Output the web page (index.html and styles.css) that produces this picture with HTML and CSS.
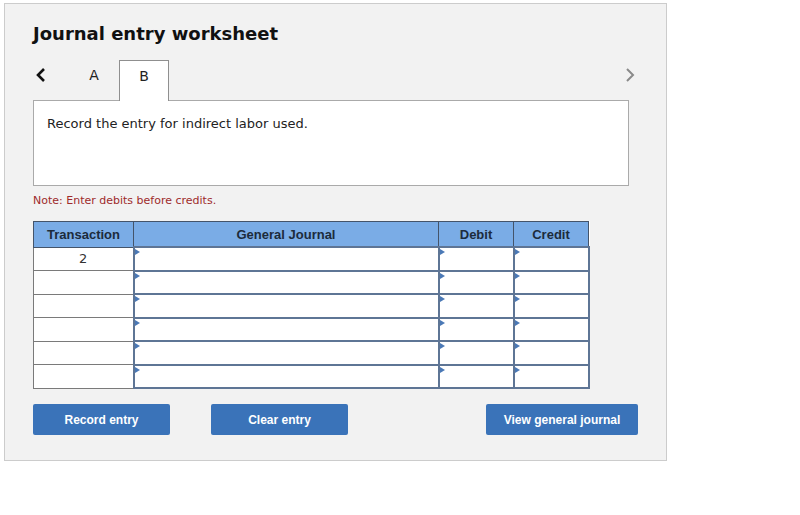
FILE: index.html
```html
<!DOCTYPE html>
<html>
<head>
<link rel="stylesheet" href="styles.css">
</head>
<body>
	<div class="worksheet">
		<h1 class="titulo">Journal entry worksheet</h1>

		<div class="abas">
			<span class="seta seta_esq">
				<svg width="11" height="16" viewBox="0 0 11 16"><path d="M9 2 L3 8 L9 14" fill="none" stroke="#111" stroke-width="2.6"/></svg>
			</span>
			<span class="aba">A</span>
			<span class="aba ativa">B</span>
			<span class="seta seta_dir">
				<svg width="11" height="16" viewBox="0 0 11 16"><path d="M2 2 L8 8 L2 14" fill="none" stroke="#8a8a8a" stroke-width="2"/></svg>
			</span>
		</div>

		<div class="enunciado">Record the entry for indirect labor used.</div>

		<p class="nota">Note: Enter debits before credits.</p>

		<table class="diario">
			<colgroup>
				<col class="col_trans">
				<col class="col_conta">
				<col class="col_valor">
				<col class="col_valor">
			</colgroup>
			<tr>
				<th>Transaction</th>
				<th>General Journal</th>
				<th>Debit</th>
				<th>Credit</th>
			</tr>
			<tr>
				<td class="trans">2</td>
				<td class="campo"></td>
				<td class="campo"></td>
				<td class="campo"></td>
			</tr>
			<tr>
				<td class="trans"></td>
				<td class="campo"></td>
				<td class="campo"></td>
				<td class="campo"></td>
			</tr>
			<tr>
				<td class="trans"></td>
				<td class="campo"></td>
				<td class="campo"></td>
				<td class="campo"></td>
			</tr>
			<tr>
				<td class="trans"></td>
				<td class="campo"></td>
				<td class="campo"></td>
				<td class="campo"></td>
			</tr>
			<tr>
				<td class="trans"></td>
				<td class="campo"></td>
				<td class="campo"></td>
				<td class="campo"></td>
			</tr>
			<tr>
				<td class="trans"></td>
				<td class="campo"></td>
				<td class="campo"></td>
				<td class="campo"></td>
			</tr>
		</table>

		<div class="botoes">
			<button class="botao">Record entry</button>
			<button class="botao botao_limpar">Clear entry</button>
			<button class="botao botao_ver">View general journal</button>
		</div>
	</div>
</body>
</html>
```

FILE: styles.css
```css
body{
	margin: 0;
	background-color: white;
	font-family: "DejaVu Sans", Verdana, sans-serif;
}

.worksheet{
	margin: 3px 0 0 4px;
	width: 663px;
	height: 458px;
	box-sizing: border-box;
	border: solid #cccccc 1px;
	background-color: #f2f2f2;
	padding: 18px 0 0 28px;
}

.titulo{
	margin: 0 0 14px 0;
	font-size: 18px;
	line-height: 24px;
	font-weight: bold;
	color: #111111;
}

.abas{
	display: flex;
	align-items: stretch;
	width: 603px;
	height: 40px;
	position: relative;
	z-index: 1;
}

.seta{
	display: flex;
	align-items: center;
	height: 30px;
}

.seta_esq{
	margin-left: 2px;
	width: 34px;
}

.seta_dir{
	margin-left: auto;
}

.aba{
	width: 50px;
	box-sizing: border-box;
	padding-top: 7px;
	text-align: center;
	font-size: 14px;
	color: #222222;
}

.aba.ativa{
	height: 41px;
	background-color: white;
	border: solid #8f8f8f 1px;
	border-bottom: none;
}

.enunciado{
	width: 596px;
	height: 86px;
	box-sizing: border-box;
	background-color: white;
	border: solid #aaaaaa 1px;
	padding: 15px 0 0 13px;
	font-size: 13px;
	line-height: 16px;
	color: #222222;
}

.nota{
	margin: 8px 0 14px 0;
	font-size: 11px;
	line-height: 13px;
	color: #9e2b2b;
}

.diario{
	border-collapse: collapse;
	table-layout: fixed;
	width: 556px;
	background-color: white;
}

.col_trans{
	width: 100px;
}

.col_conta{
	width: 305px;
}

.col_valor{
	width: 75px;
}

.diario th{
	height: 24px;
	padding: 0;
	background-color: #7aace6;
	border: solid #44546a 1px;
	font-family: "Liberation Sans", Arial, sans-serif;
	font-size: 13px;
	font-weight: bold;
	color: #1c2b3c;
}

.diario td{
	height: 21.5px;
	padding: 0;
}

.trans{
	border: solid #7a7a7a 1px;
	text-align: center;
	font-size: 13px;
	color: #333333;
}

.campo{
	position: relative;
	border: solid #5e7595 2px;
}

.campo::before{
	content: "";
	position: absolute;
	left: 0;
	top: 1px;
	border-left: solid #4b79b6 5px;
	border-top: solid transparent 3.5px;
	border-bottom: solid transparent 3.5px;
}

.botoes{
	display: flex;
	width: 605px;
	margin-top: 15px;
}

.botao{
	width: 137px;
	height: 31px;
	border: none;
	border-radius: 2px;
	background-color: #3a73b9;
	color: white;
	font-family: "Liberation Sans", Arial, sans-serif;
	font-size: 12px;
	font-weight: bold;
}

.botao_limpar{
	margin-left: 41px;
}

.botao_ver{
	width: 152px;
	margin-left: auto;
}
```
